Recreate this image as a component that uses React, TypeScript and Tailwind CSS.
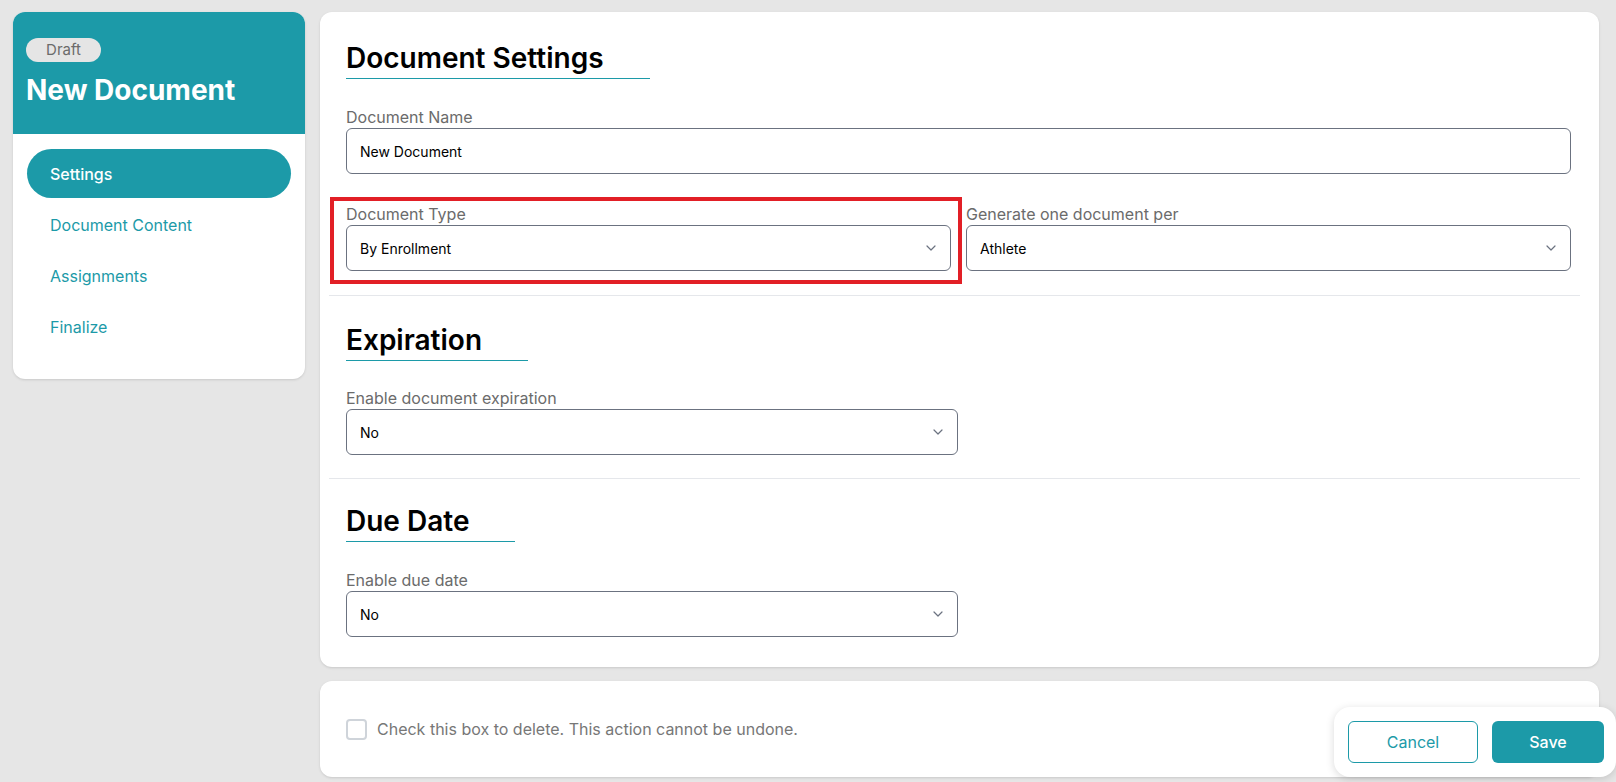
import React from 'react';

const teal = 'text-[#1c9aa8]';

const Chevron = () => (
    <svg width="10" height="6" viewBox="0 0 10 6" fill="none" className="shrink-0">
        <path d="M1 1L5 5L9 1" stroke="#6b7280" strokeWidth="1.2" strokeLinecap="round" strokeLinejoin="round" />
    </svg>
);

const Label: React.FC<{ children: React.ReactNode }> = ({ children }) => (
    <div className="text-[16px] leading-[22px] text-[#6b6b6b]">{children}</div>
);

const SelectBox: React.FC<{ value: string; className?: string }> = ({ value, className }) => (
    <div
        className={`h-[46px] rounded-[6px] border border-[#6b7280] flex items-center justify-between pl-[13px] pr-[14px] text-[14px] text-black ${className ?? ''}`}
    >
        <span>{value}</span>
        <Chevron />
    </div>
);

const SectionTitle: React.FC<{ children: React.ReactNode }> = ({ children }) => (
    <div>
        <h2 className="inline-block pr-[46px] text-[28px] leading-[40px] font-semibold text-black border-b border-[#1c9aa8]">
            {children}
        </h2>
    </div>
);

const navItems = ['Settings', 'Document Content', 'Assignments', 'Finalize'];

export default function App() {
    return (
        <div
            className="relative min-h-[782px] bg-[#e6e6e6] flex gap-[15px] pt-[12px] pr-[17px] pb-[6px] pl-[13px]"
            style={{ fontFamily: 'Inter, "Noto Sans", sans-serif' }}
        >
            {/* sidebar */}
            <aside className="w-[292px] self-start bg-white rounded-[12px] overflow-hidden shadow-sm">
                <div className="bg-[#1c9aa8] pt-[26px] pb-[24px] pl-[13px]">
                    <div className="w-[75px] h-[24px] rounded-full bg-[#e5e5e5] text-[#6b6b6b] text-[15px] flex items-center justify-center">
                        Draft
                    </div>
                    <div className="mt-[8px] text-[28px] leading-[40px] font-bold text-white">New Document</div>
                </div>
                <nav className="pt-[15px] pb-[28px] px-[14px] flex flex-col gap-[2px]">
                    {navItems.map((item, i) => (
                        <div
                            key={item}
                            className={`h-[49px] flex items-center pl-[23px] text-[16px] rounded-full ${
                                i === 0 ? 'bg-[#1c9aa8] text-white font-medium' : teal
                            }`}
                        >
                            {item}
                        </div>
                    ))}
                </nav>
            </aside>

            {/* main column */}
            <main className="flex-1 flex flex-col gap-[14px]">
                <section className="bg-white rounded-[12px] shadow-sm pt-[26px] pl-[26px] pr-[28px] pb-[30px]">
                    <SectionTitle>Document Settings</SectionTitle>

                    <div className="mt-[27px]">
                        <Label>Document Name</Label>
                        <div className="h-[46px] rounded-[6px] border border-[#6b7280] flex items-center pl-[13px] text-[14px] text-black">
                            New Document
                        </div>
                    </div>

                    <div className="mt-[29px] grid grid-cols-2 gap-[15px]">
                        <div className="relative">
                            <Label>Document Type</Label>
                            <SelectBox value="By Enrollment" />
                            <div className="absolute -left-[16px] -right-[11px] -top-[6px] -bottom-[13px] border-[4px] border-[#e21f26] pointer-events-none" />
                        </div>
                        <div>
                            <Label>Generate one document per</Label>
                            <SelectBox value="Athlete" />
                        </div>
                    </div>

                    <div className="-ml-[17px] -mr-[9px] mt-[24px] border-t border-[#e5e7eb]" />

                    <div className="mt-[24px]">
                        <SectionTitle>Expiration</SectionTitle>
                    </div>
                    <div className="mt-[26px]">
                        <Label>Enable document expiration</Label>
                        <SelectBox value="No" className="w-[612px]" />
                    </div>

                    <div className="-ml-[17px] -mr-[9px] mt-[23px] border-t border-[#e5e7eb]" />

                    <div className="mt-[22px]">
                        <SectionTitle>Due Date</SectionTitle>
                    </div>
                    <div className="mt-[27px]">
                        <Label>Enable due date</Label>
                        <SelectBox value="No" className="w-[612px]" />
                    </div>
                </section>

                <section className="h-[96px] bg-white rounded-[12px] shadow-sm flex items-center pl-[26px] gap-[10px]">
                    <div className="w-[21px] h-[21px] rounded-[4px] border-2 border-[#cfd4da] bg-white" />
                    <span className="text-[16px] text-[#777777]">Check this box to delete. This action cannot be undone.</span>
                </section>
            </main>

            {/* floating actions */}
            <div className="absolute right-0 bottom-[6px] h-[70px] w-[282px] bg-white rounded-[16px] shadow-[0_2px_8px_rgba(0,0,0,0.15)] flex items-center pl-[14px] gap-[14px]">
                <button className="w-[130px] h-[42px] rounded-[6px] border border-[#1c9aa8] text-[#1c9aa8] text-[16px]">
                    Cancel
                </button>
                <button className="w-[112px] h-[42px] rounded-[6px] bg-[#1c9aa8] text-white text-[16px] font-medium">
                    Save
                </button>
            </div>
        </div>
    );
}
